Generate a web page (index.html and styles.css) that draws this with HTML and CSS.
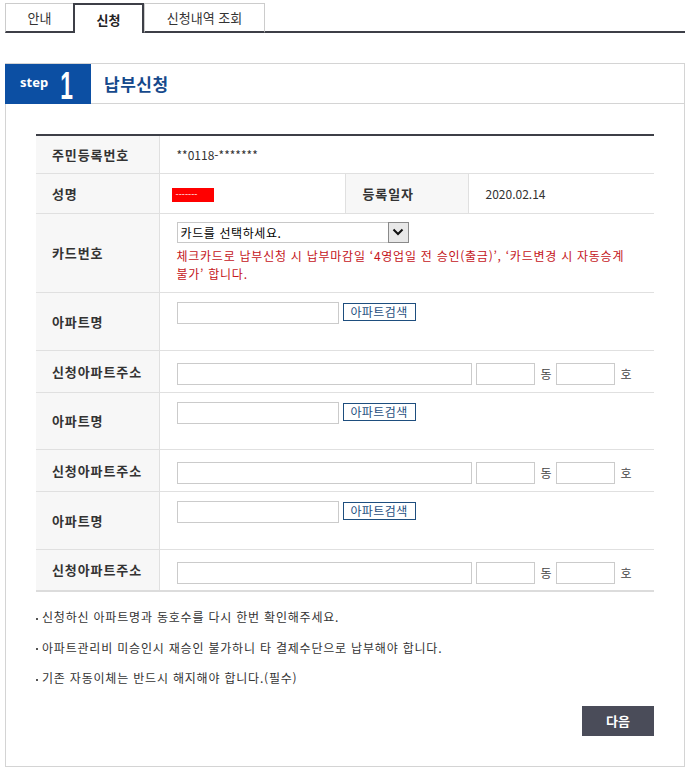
FILE: index.html
```html
<!DOCTYPE html>
<html lang="ko">
<head>
  <meta charset="UTF-8" />
  <meta name="viewport" content="width=device-width, initial-scale=1.0"/>
  <title>납부신청</title>
  <link rel="stylesheet" href="styles.css">
</head>
<body>
  <div class="tabs">
    <a class="tab">안내</a>
    <a class="tab active">신청</a>
    <a class="tab">신청내역 조회</a>
    <span class="tab-rest"></span>
  </div>

  <div class="panel">
    <div class="step-head">
      <div class="step-badge"><span class="step-word">step</span><span class="step-num">1</span></div>
      <h2 class="step-title">납부신청</h2>
    </div>

    <div class="panel-body">
      <table class="form-table">
        <colgroup>
          <col class="c-label"><col class="c-val"><col class="c-label"><col>
        </colgroup>
        <tr class="r38">
          <th>주민등록번호</th>
          <td colspan="3">**0118-*******</td>
        </tr>
        <tr class="r40">
          <th>성명</th>
          <td><span class="masked">-------</span></td>
          <th class="th-mid">등록일자</th>
          <td>2020.02.14</td>
        </tr>
        <tr class="r79">
          <th>카드번호</th>
          <td colspan="3" class="top card-cell">
            <div class="select-wrap">
              <select class="select"><option>카드를 선택하세요.</option></select>
              <span class="select-arrow"><svg width="12" height="8" viewBox="0 0 12 8"><path d="M1.5 1.5 L6 6 L10.5 1.5" fill="none" stroke="#111" stroke-width="2"/></svg></span>
            </div>
            <p class="warn">체크카드로 납부신청 시 납부마감일 ‘4영업일 전 승인(출금)’, ‘카드변경 시 자동승계<br>불가’ 합니다.</p>
          </td>
        </tr>

        <tr class="r58">
          <th>아파트명</th>
          <td colspan="3" class="top apt-cell"><input class="inp w162" type="text"><button class="btn-search">아파트검색</button></td>
        </tr>
        <tr class="r42">
          <th>신청아파트주소</th>
          <td colspan="3" class="top addr-cell"><input class="inp w295" type="text"><input class="inp w59" type="text"><span class="unit">동</span><input class="inp w59" type="text"><span class="unit">호</span></td>
        </tr>

        <tr class="r57">
          <th>아파트명</th>
          <td colspan="3" class="top apt-cell"><input class="inp w162" type="text"><button class="btn-search">아파트검색</button></td>
        </tr>
        <tr class="r42">
          <th>신청아파트주소</th>
          <td colspan="3" class="top addr-cell"><input class="inp w295" type="text"><input class="inp w59" type="text"><span class="unit">동</span><input class="inp w59" type="text"><span class="unit">호</span></td>
        </tr>

        <tr class="r58">
          <th>아파트명</th>
          <td colspan="3" class="top apt-cell"><input class="inp w162" type="text"><button class="btn-search">아파트검색</button></td>
        </tr>
        <tr class="r42">
          <th>신청아파트주소</th>
          <td colspan="3" class="top addr-cell"><input class="inp w295" type="text"><input class="inp w59" type="text"><span class="unit">동</span><input class="inp w59" type="text"><span class="unit">호</span></td>
        </tr>
      </table>

      <ul class="notes">
        <li>신청하신 아파트명과 동호수를 다시 한번 확인해주세요.</li>
        <li>아파트관리비 미승인시 재승인 불가하니 타 결제수단으로 납부해야 합니다.</li>
        <li>기존 자동이체는 반드시 해지해야 합니다.(필수)</li>
      </ul>

      <div class="actions">
        <button class="btn-next">다음</button>
      </div>
    </div>
  </div>
</body>
</html>
```

FILE: styles.css
```css
body {
  margin: 0;
  padding: 3px 5px 0 5px;
  font-family: "Noto Sans CJK KR", "Noto Sans", sans-serif;
  font-size: 12px;
  color: #333;
  background: #fff;
}
.tabs {
  display: flex;
  height: 30px;
  width: 680px;
}
.tab {
  display: flex;
  align-items: center;
  justify-content: center;
  box-sizing: border-box;
  height: 30px;
  font-size: 13px;
  line-height: 1;
  color: #333;
  border: 1px solid #ccc;
  border-bottom: 2px solid #3d3f47;
  border-right: none;
}
.tab:nth-child(1) { width: 68px; }
.tab:nth-child(2) { width: 71px; }
.tab:nth-child(3) { width: 121px; border-right: 1px solid #ccc; }
.tab.active {
  border: 2px solid #3d3f47;
  border-bottom: none;
  font-weight: bold;
  color: #222;
}
.tab-rest {
  flex: 1;
  border-bottom: 2px solid #3d3f47;
}
.panel {
  margin-top: 30px;
  width: 680px;
  height: 704px;
  box-sizing: border-box;
  border: 1px solid #d4d4d4;
  border-top: none;
}
.step-head {
  display: flex;
  align-items: center;
  height: 41px;
  box-sizing: border-box;
  border-top: 1px solid #d4d4d4;
  border-bottom: 1px solid #d4d4d4;
  margin: 0 -1px;
}
.step-badge {
  width: 86px;
  height: 40px;
  margin-top: -1px;
  margin-bottom: -1px;
  background: #0c4fa3;
  color: #fff;
  display: flex;
  align-items: center;
  box-sizing: border-box;
  padding-left: 15px;
}
.step-word {
  font-family: "Noto Sans", sans-serif;
  font-weight: bold;
  font-size: 13px;
  line-height: 1;
  margin-top: -3px;
}
.step-num {
  display: inline-block;
  font-family: "Liberation Sans", sans-serif;
  font-weight: bold;
  font-size: 38px;
  line-height: 1;
  margin-left: 8px;
  margin-top: 4px;
  transform: scaleX(0.6);
}
.step-title {
  margin: 0 0 0 13px;
  font-size: 17px;
  font-weight: bold;
  color: #16498c;
  line-height: 1;
  letter-spacing: 0.5px;
}
.panel-body {
  padding: 30px 30px 0 30px;
}
.form-table {
  width: 618px;
  border-collapse: collapse;
  border-top: 2px solid #3d3f47;
  border-bottom: 2px solid #dcdcdc;
  table-layout: fixed;
}
.c-label { width: 123px; }
.c-val { width: 186px; }
.form-table th {
  background: #f7f7f7;
  text-align: left;
  padding: 0 0 0 16px;
  font-size: 13px;
  font-weight: bold;
  letter-spacing: 0.9px;
  color: #333;
  border-right: 1px solid #e0e0e0;
  border-bottom: 1px solid #e0e0e0;
}
.form-table th.th-mid {
  border-left: 1px solid #e0e0e0;
  padding-left: 17px;
}
.form-table td {
  padding: 0 0 0 17px;
  border-bottom: 1px solid #e0e0e0;
  font-size: 12px;
  color: #333;
  vertical-align: middle;
}
.form-table td.top { vertical-align: top; }
.r38 { height: 38px; }
.r40 { height: 40px; }
.r79 { height: 79px; }
.r58 { height: 58px; }
.r57 { height: 57px; }
.r42 { height: 42px; }
.masked {
  display: inline-block;
  background: #ff0000;
  color: #fff;
  font-size: 9px;
  line-height: 14px;
  width: 42px;
  padding-left: 4px;
  box-sizing: border-box;
  margin-left: -5px;
}
.card-cell { padding-top: 8px !important; }
.select-wrap {
  position: relative;
  width: 232px;
  height: 21px;
}
.select {
  appearance: none;
  -webkit-appearance: none;
  width: 100%;
  height: 21px;
  border: 1px solid #c8c8c8;
  background: #fff;
  font-family: inherit;
  font-size: 12px;
  letter-spacing: 0.6px;
  color: #000;
  padding: 0 0 0 3px;
  margin: 0;
  border-radius: 0;
}
.select-arrow {
  position: absolute;
  right: 0;
  top: 0;
  width: 19px;
  height: 19px;
  border: 1px solid #8a8a8a;
  background: #e8e8e8;
  display: flex;
  align-items: center;
  justify-content: center;
}
.warn {
  margin: 4px 0 0 0;
  color: #c4141a;
  font-size: 12px;
  letter-spacing: 0.75px;
  line-height: 18px;
}
.apt-cell { padding-top: 9px !important; }
.addr-cell { padding-top: 12px !important; }
.inp {
  box-sizing: border-box;
  height: 22px;
  border: 1px solid #cbcbcb;
  margin: 0;
  padding: 0 3px;
  vertical-align: middle;
  font-family: inherit;
}
.inp + .inp { margin-left: 4px; }
.w162 { width: 162px; }
.w295 { width: 295px; }
.w59 { width: 59px; }
.unit {
  display: inline-block;
  vertical-align: middle;
  margin: 0 4px 0 6px;
  font-size: 12px;
  color: #444;
}
.btn-search {
  box-sizing: border-box;
  height: 18px;
  width: 73px;
  border: 1px solid #1e4e7e;
  background: #fff;
  color: #1e4e7e;
  font-family: inherit;
  font-size: 12px;
  letter-spacing: 0.4px;
  line-height: 12px;
  padding: 0;
  vertical-align: top;
  margin: 1px 0 0 4px;
  border-radius: 0;
}
.notes {
  list-style: none;
  margin: 10px 0 0 0;
  padding: 0;
}
.notes li {
  font-size: 12px;
  letter-spacing: 0.8px;
  line-height: 30.5px;
  color: #333;
}
.notes li::before {
  content: "";
  display: inline-block;
  width: 2px;
  height: 2px;
  background: #555;
  vertical-align: middle;
  margin: 0 4px 0 0;
}
.actions {
  display: flex;
  justify-content: flex-end;
  margin-top: 12px;
}
.btn-next {
  width: 72px;
  height: 30px;
  border: none;
  background: #4a4c59;
  color: #fff;
  font-family: inherit;
  font-weight: bold;
  font-size: 13px;
  border-radius: 0;
  cursor: pointer;
}
```
